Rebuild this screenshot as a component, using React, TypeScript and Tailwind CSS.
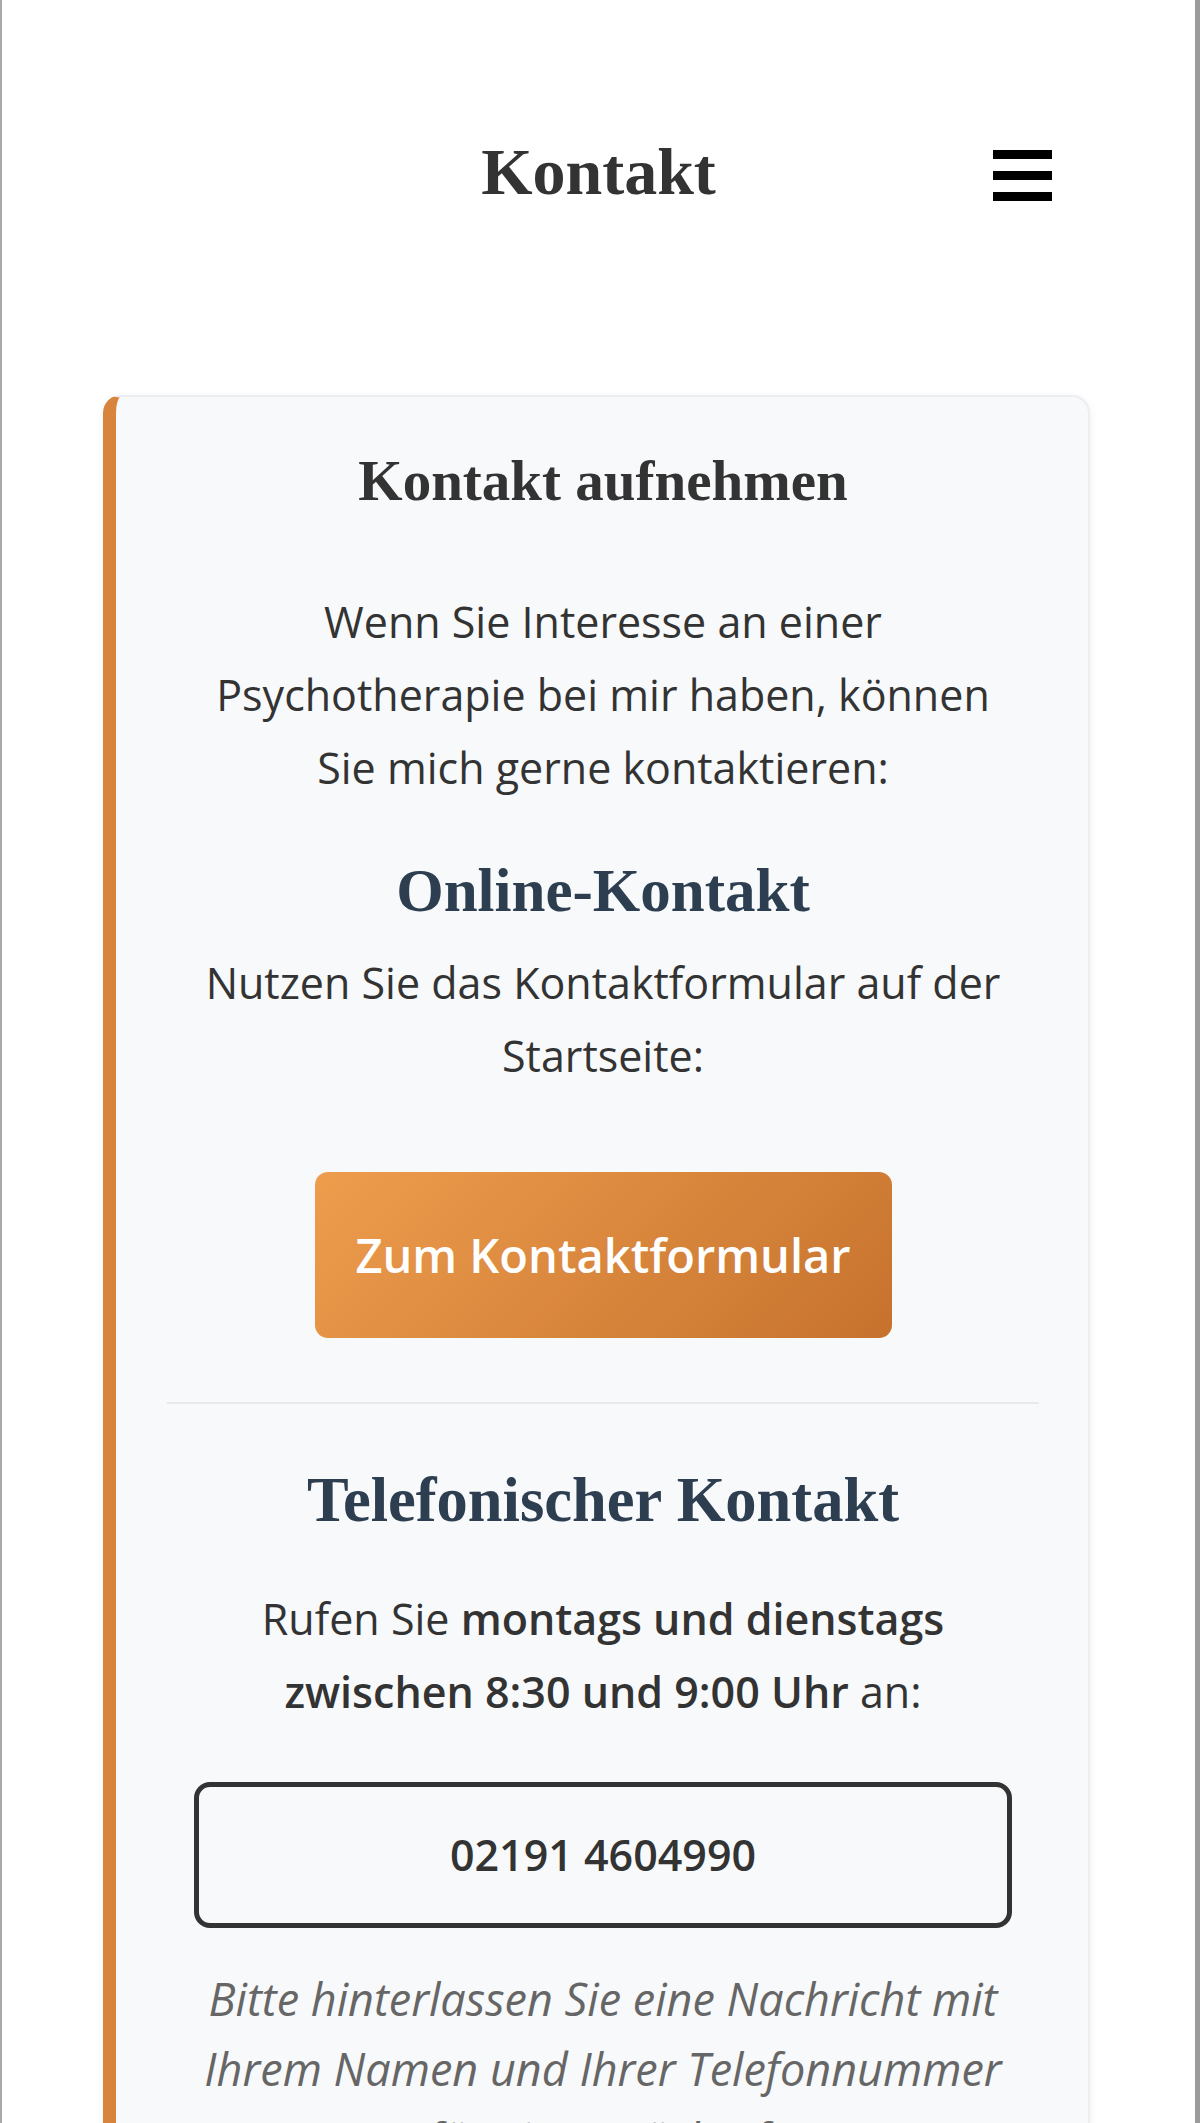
export default function App() {
  const serif = "font-['Liberation_Serif',_'Times_New_Roman',serif]";

  return (
    <div className="flex min-h-[2123px] bg-white font-['Open_Sans',_sans-serif] text-[#333]">
      <div className="w-[2px] shrink-0 bg-[#a9a9a9]" />

      <main className="flex-1">
        {/* top bar */}
        <header className="grid h-[343px] grid-cols-[1fr_auto_1fr] items-center">
          <div />
          <h1 className={`${serif} text-[66px] font-bold leading-[79px] text-[#333]`}>Kontakt</h1>
          <button aria-label="Menü" className="mr-[143px] mt-[7px] flex flex-col gap-[12px] justify-self-end">
            <span className="block h-[9px] w-[59px] bg-black" />
            <span className="block h-[9px] w-[59px] bg-black" />
            <span className="block h-[9px] w-[59px] bg-black" />
          </button>
        </header>

        {/* contact card */}
        <section className="ml-[101px] mt-[52px] w-[987px] rounded-[18px] border-2 border-[#eceef1] border-l-[13px] border-l-[#d9843c] bg-[#f8f9fa] pb-[50px] pl-[51px] pr-[49px] pt-[50px] shadow-[0_2px_10px_rgba(0,0,0,0.06)]">
          <div className="flex flex-col items-center text-center">
            <h2 className={`${serif} text-[57px] font-bold leading-[68px] text-[#333]`}>Kontakt aufnehmen</h2>

            <p className="mt-[70px] max-w-[820px] text-[43px] leading-[73px]">
              Wenn Sie Interesse an einer Psychotherapie bei mir haben, können Sie mich gerne kontaktieren:
            </p>

            <h3 className={`${serif} mt-[50px] text-[61px] font-bold leading-[73px] text-[#2c3e50]`}>Online-Kontakt</h3>
            <p className="mt-[19px] max-w-[820px] text-[43px] leading-[73px]">
              Nutzen Sie das Kontaktformular auf der Startseite:
            </p>

            <a
              href="#kontaktformular"
              className="mt-[80px] flex h-[166px] w-[577px] items-center justify-center rounded-[13px] bg-[linear-gradient(135deg,#ee9d4d,#c6722e)] text-[47px] font-semibold text-white"
            >
              Zum Kontaktformular
            </a>

            <div className="mt-[64px] h-[2px] w-full bg-[#e7e9ec]" />

            <h3 className={`${serif} mt-[60px] text-[62.5px] font-bold leading-[73px] text-[#2c3e50]`}>Telefonischer Kontakt</h3>
            <p className="mt-[45px] max-w-[820px] text-[43px] leading-[73px]">
              Rufen Sie <span className="font-semibold">montags und dienstags zwischen 8:30 und 9:00 Uhr</span> an:
            </p>

            <div className="mt-[54px] flex h-[146px] w-[818px] items-center justify-center rounded-[16px] border-[5px] border-[#333]">
              <span className="text-[43px] font-semibold text-[#333]">02191 4604990</span>
            </div>

            <p className="mt-[36px] max-w-[820px] text-[45px] italic leading-[70px] text-[#666]">
              Bitte hinterlassen Sie eine Nachricht mit Ihrem Namen und Ihrer Telefonnummer für einen Rückruf.
            </p>
          </div>
        </section>
      </main>

      <div className="w-[5px] shrink-0 bg-[#9b9b9b]" />
    </div>
  );
}
